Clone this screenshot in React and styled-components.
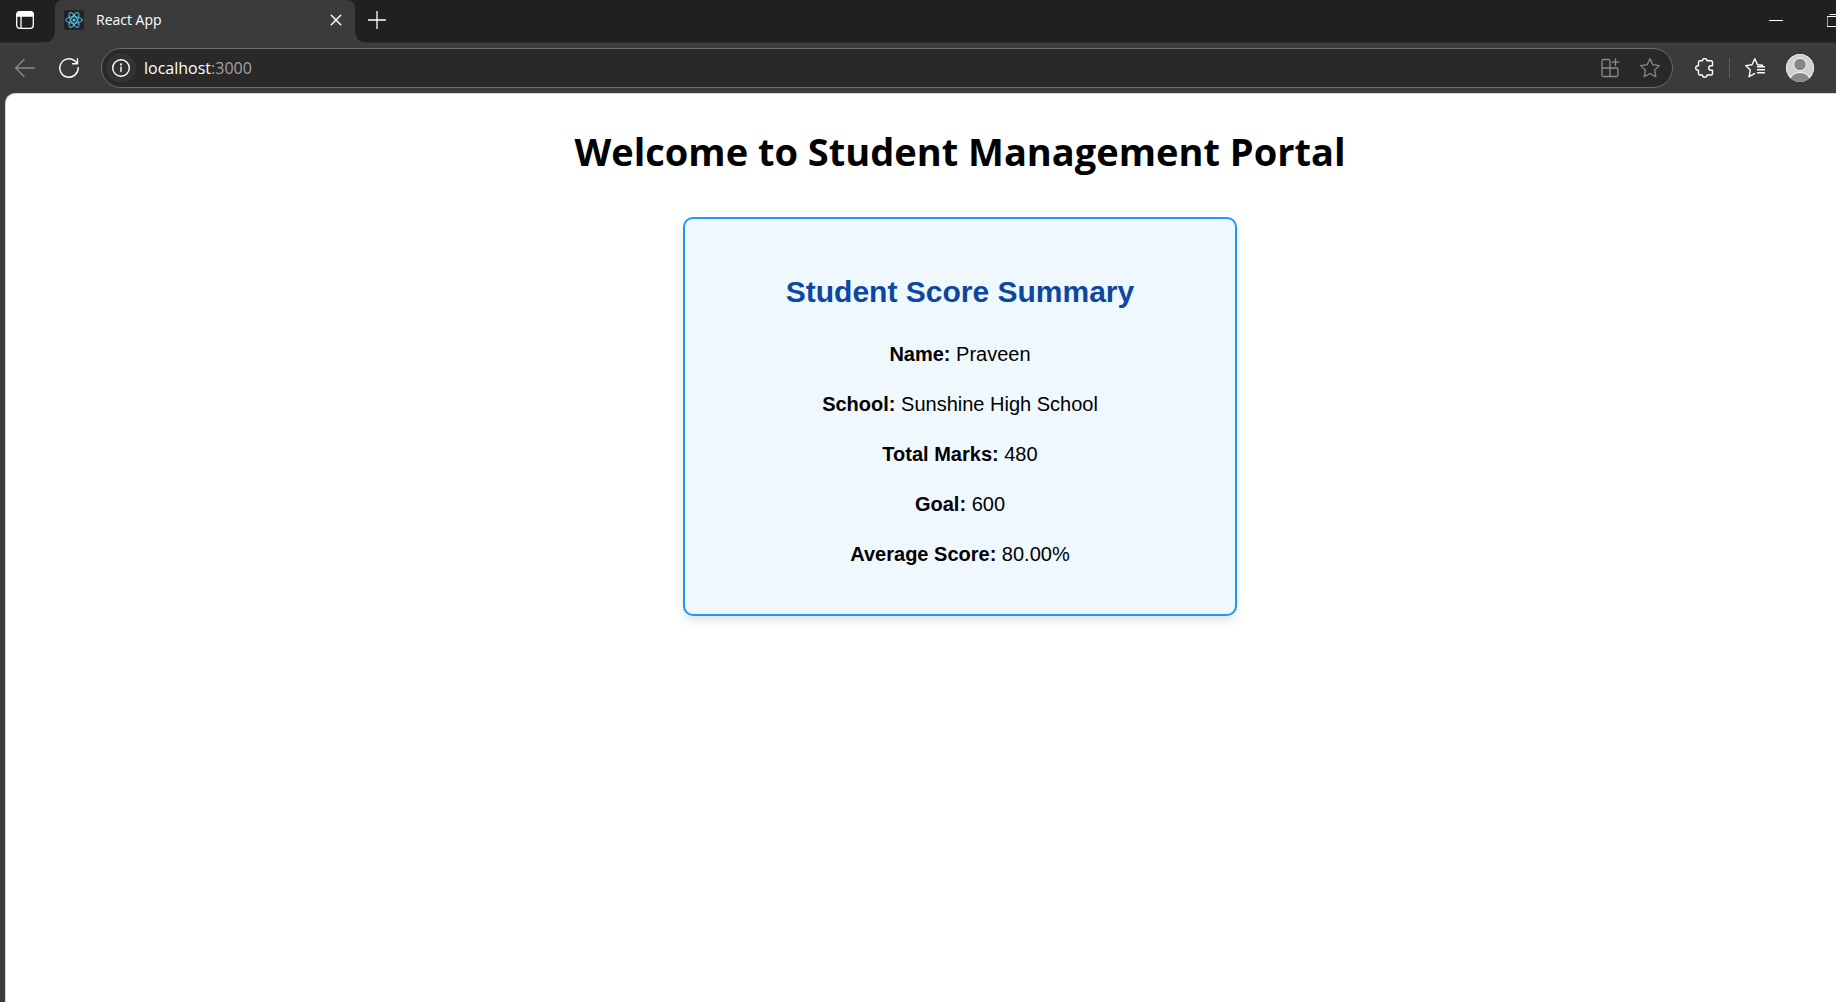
import React from "react";
import styled, { createGlobalStyle } from "styled-components";

const GlobalStyle = createGlobalStyle`
  *, *::before, *::after { box-sizing: border-box; }
  html, body { margin: 0; background: #3b3b3b; }
  body { overflow: hidden; font-family: "Liberation Sans", Arial, sans-serif; }
  button { border: 0; padding: 0; background: none; color: inherit; font: inherit; }
  svg { display: block; fill: none; stroke: currentColor; }
`;

const uiFont = `"Open Sans", "Segoe UI", sans-serif`;

/* The window runs past the right edge of the screen. */
const Window = styled.div`
  width: calc(100% + 83px);
  min-height: 100vh;
  display: flex;
  flex-direction: column;
  background: #3b3b3b;
  color: #fff;
`;

const TabStrip = styled.header`
  display: flex;
  height: 43px;
  background: #202020;
  border-bottom: 1px solid #2e2e2e;
`;

const IconButton = styled.button`
  flex: none;
  display: grid;
  place-items: center;
  width: ${(p) => p.$width || 40}px;
  height: ${(p) => p.$height || 40}px;
  color: ${(p) => p.$color || "#fff"};
`;

const Tab = styled.div`
  position: relative;
  display: flex;
  align-items: center;
  width: 300px;
  height: 43px;
  margin-left: 5px;
  padding: 0 7px 4px 9px;
  background: #3b3b3b;
  border-radius: 8px 8px 0 0;

  &::before, &::after {
    content: "";
    position: absolute;
    bottom: 0;
    width: 10px;
    height: 10px;
  }
  &::before {
    left: -10px;
    background: radial-gradient(circle at 0 0, transparent 9px, #3b3b3b 10px);
  }
  &::after {
    right: -10px;
    background: radial-gradient(circle at 100% 0, transparent 9px, #3b3b3b 10px);
  }
`;

const Favicon = styled.span`
  display: grid;
  place-items: center;
  width: 20px;
  height: 20px;
  border-radius: 2px;
  background: #20232a;
  color: #58c4dc;
`;

const TabTitle = styled.span`
  flex: 1;
  margin-left: 12px;
  font: 14px/20px ${uiFont};
`;

const WindowControls = styled.div`
  display: flex;
  margin-left: auto;
  padding-right: 56px;
`;

const Toolbar = styled.nav`
  display: flex;
  align-items: center;
  height: 50px;
  padding: 0 105px 0 5px;
`;

const AddressBar = styled.label`
  flex: 1;
  display: flex;
  align-items: center;
  height: 40px;
  margin: 0 12px 0 8px;
  padding: 0 2px 0 4px;
  border: 1px solid #6c6c6c;
  border-radius: 20px;
  background: #292929;
  font: 16px/24px ${uiFont};
`;

const SiteInfo = styled.button`
  display: grid;
  place-items: center;
  width: 30px;
  height: 30px;
  margin-right: 8px;
  border-radius: 50%;
  background: #333;
  color: #fff;
`;

const Host = styled.input`
  field-sizing: content;
  border: 0;
  padding: 0;
  background: none;
  color: #fff;
  font: inherit;
  outline: 0;
`;

const Port = styled.span`
  flex: 1;
  color: #a3a3a3;
`;

const Divider = styled.span`
  width: 1px;
  height: 20px;
  margin: 0 5px 0 4px;
  background: #5c5c5c;
`;

const Avatar = styled.button`
  width: 28px;
  height: 28px;
  margin-left: 11px;
  border-radius: 50%;
  overflow: hidden;
`;

const Page = styled.main`
  flex: 1;
  margin: 0 5px;
  padding: 27px 0 40px;
  border-left: 1px solid #d8d8d8;
  border-top: 1px solid #d8d8d8;
  border-radius: 10px 10px 0 0;
  background: #fff;
  color: #000;
  text-align: center;
`;

const Heading = styled.h1`
  margin: 0 0 36px;
  font: 700 38px/60px ${uiFont};
`;

const Card = styled.section`
  width: 554px;
  margin: 0 auto;
  padding: 25px;
  border: 2px solid #2196f3;
  border-radius: 10px;
  background: #f0f8ff;
  box-shadow: 0 5px 10px rgba(0, 0, 0, 0.1);
`;

const CardTitle = styled.h2`
  margin: 25px 0;
  color: #0d47a1;
  font-size: 30px;
  line-height: 45px;
`;

const Fact = styled.p`
  margin: 20px 0;
  font-size: 20px;
  line-height: 30px;
`;

const facts = [
  ["Name:", "Praveen"],
  ["School:", "Sunshine High School"],
  ["Total Marks:", "480"],
  ["Goal:", "600"],
  ["Average Score:", "80.00%"],
];

const Icon = ({ size = 20, width = 1.3, children }) => (
  <svg width={size} height={size} viewBox={`0 0 ${size} ${size}`} strokeWidth={width} strokeLinecap="round" strokeLinejoin="round" aria-hidden="true">
    {children}
  </svg>
);

const TabActionsIcon = () => (
  <Icon size={20}>
    <rect x="1.7" y="1.7" width="16.6" height="16.6" rx="3" />
    <path d="M2 4.5a2.5 2.5 0 0 1 2.5-2.5h11a2.5 2.5 0 0 1 2.5 2.5V6H2z" fill="currentColor" />
    <path d="M6 6v12" />
  </Icon>
);

const ReactLogo = () => (
  <Icon size={18} width={1}>
    {[30, 90, 150].map((a) => (
      <ellipse key={a} cx="9" cy="9" rx="8.3" ry="3.2" transform={`rotate(${a - 30} 9 9)`} />
    ))}
    <circle cx="9" cy="9" r="1.5" fill="currentColor" stroke="none" />
  </Icon>
);

export default function App() {
  return (
    <>
      <GlobalStyle />
      <Window>
        <TabStrip>
          <IconButton $width={50} aria-label="Tab actions"><TabActionsIcon /></IconButton>
          <Tab>
            <Favicon><ReactLogo /></Favicon>
            <TabTitle>React App</TabTitle>
            <IconButton $width={24} $height={24} aria-label="Close tab">
              <Icon size={12} width={1.5}><path d="M1.3 1.3l9.4 9.4M10.7 1.3L1.3 10.7" /></Icon>
            </IconButton>
          </Tab>
          <IconButton $width={44} aria-label="New tab">
            <Icon size={18}><path d="M9 .5v17M.5 9h17" /></Icon>
          </IconButton>
          <WindowControls>
            <IconButton $width={58} aria-label="Minimize">
              <Icon size={14} width={1}><path d="M.5 7.5h13" /></Icon>
            </IconButton>
            <IconButton $width={58} aria-label="Restore">
              <Icon size={14} width={1}>
                <path d="M.5 3.5h10v10H.5zM3 1.500h7.500a2 2 0 0 1 2 2V11" />
              </Icon>
            </IconButton>
          </WindowControls>
        </TabStrip>
        <Toolbar>
          <IconButton $color="#8a8a8a" aria-label="Back">
            <Icon><path d="M19.5 10H.8M9 1.5L.7 10 9 18.5" /></Icon>
          </IconButton>
          <IconButton $width={48} aria-label="Refresh">
            <Icon width={1.4}><path d="M19.2 9.500a9.200 9.200 0 1 1-3.700-6.900L18.500 5.500M18.500.8v4.900h-4.900" /></Icon>
          </IconButton>
          <AddressBar>
            <SiteInfo aria-label="View site information">
              <Icon width={1.4}>
                <circle cx="10" cy="10" r="8.3" />
                <path d="M10 9v4.5" />
                <circle cx="10" cy="6.4" r=".4" fill="currentColor" />
              </Icon>
            </SiteInfo>
            <Host aria-label="Address" defaultValue="localhost" />
            <Port>:3000</Port>
            <IconButton $color="#8a8a8a" aria-label="App available">
              <Icon>
                <path d="M10 10V3a1.500 1.500 0 0 0-1.500-1.500h-5A1.500 1.500 0 0 0 2 3v14a1.500 1.500 0 0 0 1.500 1.500h13A1.500 1.500 0 0 0 18 17v-5.500a1.500 1.500 0 0 0-1.500-1.500H2M10 10v8.500M15.500 1v6.500M12.300 4.200h6.500" />
              </Icon>
            </IconButton>
            <IconButton $color="#8a8a8a" aria-label="Add to favorites">
              <Icon><path d="M10 .8l2.800 5.900 6.500.9-4.700 4.500 1.200 6.600L10 15.500l-5.800 3.200 1.200-6.600L.7 7.600l6.500-.9z" /></Icon>
            </IconButton>
          </AddressBar>
          <IconButton aria-label="Extensions">
            <Icon width={1.4}>
              <path d="M5 2.800h2.400a2.300 2.300 0 0 1 4.600 0h4a1.500 1.500 0 0 1 1.500 1.500v3.400h-1.500a2.300 2.300 0 0 0 0 4.600h1.500v3.200a1.500 1.500 0 0 1-1.500 1.500h-4a2.300 2.300 0 0 1-4.600 0H5a1.500 1.500 0 0 1-1.500-1.500v-3.200h-.500a2.300 2.300 0 0 1 0-4.600h.500V4.300A1.500 1.500 0 0 1 5 2.800z" />
            </Icon>
          </IconButton>
          <Divider />
          <IconButton aria-label="Favorites">
            <Icon width={1.4}>
              <path d="M17.500 7.300l-5-.6L9.800.8 7 6.700l-6.300.9L5.300 12l-1.200 6.700 5.400-3M12.500 8.800h7M12.500 11.800h7M12.500 14.800h7" />
            </Icon>
          </IconButton>
          <Avatar aria-label="Profile">
            <svg width="28" height="28" viewBox="0 0 28 28" stroke="none" aria-hidden="true">
              <circle cx="14" cy="14" r="14" fill="#d2d0ce" />
              <circle cx="14" cy="10.5" r="6.3" fill="#8a8886" />
              <ellipse cx="14" cy="26" rx="10" ry="7.5" fill="#8a8886" />
            </svg>
          </Avatar>
        </Toolbar>
        <Page>
          <Heading>Welcome to Student Management Portal</Heading>
          <Card>
            <CardTitle>Student Score Summary</CardTitle>
            {facts.map(([label, value]) => (
              <Fact key={label}><strong>{label}</strong> {value}</Fact>
            ))}
          </Card>
        </Page>
      </Window>
    </>
  );
}
